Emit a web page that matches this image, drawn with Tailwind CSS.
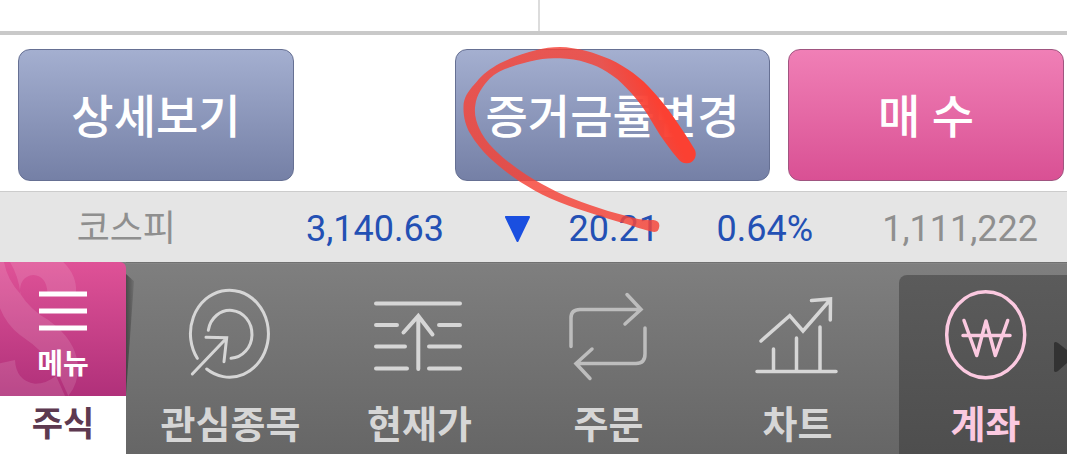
<!DOCTYPE html>
<html lang="ko">
  <head>
    <meta charset="UTF-8" />
    <meta name="viewport" content="width=device-width, initial-scale=1.0" />
    <script src="https://cdn.jsdelivr.net/npm/@tailwindcss/browser@4"></script>
    <title>주식</title>
  </head>
  <body
    class="w-full min-h-screen bg-white flex flex-col overflow-x-hidden font-[Roboto,'Noto_Sans_CJK_KR',sans-serif]"
  >
    <!-- bottom edge of the list -->
    <div class="grid grid-cols-2 h-[35px] border-b-4 border-[#c9c9c9]">
      <div></div>
      <div class="border-l-2 border-[#dcdcdc] ml-1"></div>
    </div>

    <main
      class="grid grid-cols-[276fr_125fr_315fr_276fr] gap-[18px] pt-[14px] pb-[10px] pl-[18px] pr-[3px]"
    >
      <button
        type="button"
        class="h-[132px] pt-1 rounded-xl border border-[#667093] bg-linear-to-b from-[#a4afd0] to-[#7580a6] text-white text-[46px] font-medium"
      >
        상세보기
      </button>
      <div></div>
      <div class="relative z-10">
        <button
          type="button"
          class="w-full h-[132px] pt-1 rounded-xl border border-[#667093] bg-linear-to-b from-[#a4afd0] to-[#7580a6] text-white text-[46px] font-medium whitespace-nowrap"
        >
          증거금률변경
        </button>
        <!-- red marker -->
        <svg
          class="absolute -left-[15px] -top-[29px] w-[340px] h-[230px] max-w-none pointer-events-none"
          viewBox="0 0 1020 690"
          aria-hidden="true"
        >
          <defs>
            <linearGradient id="marker" gradientUnits="userSpaceOnUse" x1="420" y1="0" x2="508" y2="-44">
              <stop offset="0" stop-color="#f5453a" stop-opacity="0.84" />
              <stop offset="1" stop-color="#fb4032" />
            </linearGradient>
          </defs>
          <path
            fill="url(#marker)"
            d="M742 430C762 428 772 408 765 390C745 355 722 322 700 290C680 260 662 240 640 215C602 172 560 142 510 118C465 98 410 82 360 81C335 81 312 85 290 90C250 100 215 112 180 130C150 146 128 164 110 185C90 207 75 225 71 250C68 285 76 315 90 340C106 368 126 392 150 415C178 441 208 464 240 485C270 504 300 521 330 535C366 551 403 564 440 575C480 588 520 601 560 612C590 622 620 632 643 636C654 636 657 627 658 618C659 606 650 601 640 600C612 602 586 596 560 588C522 579 486 568 450 555C416 543 382 530 350 515C319 500 289 484 260 465C228 444 197 421 170 395C150 376 131 354 120 330C107 304 102 280 106 255C110 225 128 198 150 175C166 160 187 149 210 142C236 132 262 126 290 120C313 116 336 115 360 115C388 116 414 120 440 128C462 134 482 143 500 155C523 169 543 185 560 205C579 224 595 243 610 265C628 291 643 318 660 345C677 370 693 392 712 414C720 425 730 431 742 430Z"
          />
        </svg>
      </div>
      <button
        type="button"
        class="h-[132px] pt-1 rounded-xl border border-[#a05580] bg-linear-to-b from-[#f07fb6] to-[#d95094] text-white text-[46px] font-medium"
      >
        매 수
      </button>
    </main>

    <section
      class="grid grid-cols-[176fr_268fr_87fr_128fr_154fr_225fr] items-center h-[71px] pt-1 pr-[29px] border-t border-[#cccccc] bg-[#e5e5e5] text-right text-[36px] text-[#2350b4]"
    >
      <span class="text-[#8f8f8f]">코스피</span>
      <span>3,140.63</span>
      <svg class="w-[27px] h-[27px] ml-auto" viewBox="0 0 27 27" aria-label="하락">
        <path d="M2 1H25L13.500 25Z" fill="#1a4fe0" stroke="#1a4fe0" stroke-width="2" stroke-linejoin="round" />
      </svg>
      <span>20.21</span>
      <span>0.64%</span>
      <span class="text-[#8f8f8f]">1,111,222</span>
    </section>

    <nav
      class="relative flex-1 flex min-h-[192px] bg-linear-to-b from-[#7f7f7f] to-[#666666] text-[#d6d6d6] text-[38px] leading-[56px] font-bold"
    >
      <div class="w-[126px] shrink-0 flex flex-col">
        <button
          type="button"
          class="relative h-[134px] overflow-hidden rounded-tr-md bg-linear-to-b from-[#df5297] to-[#b0307a] text-white"
        >
          <svg class="absolute left-0 top-0 w-[126px] h-[134px]" viewBox="0 21 378 402" aria-hidden="true">
            <path
              fill="#fff"
              fill-opacity="0.12"
              d="M0 21H12Q22 75 62 118Q55 62 30 21H190Q232 62 228 115L142 112Q140 64 100 60Q58 64 60 115Q90 165 145 195Q228 255 234 332Q236 385 205 423L172 350Q135 290 60 240Q20 210 0 160ZM0 325L45 315Q48 378 105 386Q140 386 168 362L195 423H0Z"
            />
          </svg>
          <span class="relative flex flex-col items-center pt-[20px]">
            <svg class="w-[48px] h-[40px]" viewBox="0 0 48 40" stroke="#fff" stroke-width="5" aria-hidden="true">
              <path d="M0 3H48M0 20H48M0 37H48" />
            </svg>
            <span class="mt-3 text-[28px] leading-[44px]">메뉴</span>
          </span>
        </button>
        <a href="#" class="flex-1 bg-white text-center text-[34px] text-[#5d3950]">주식</a>
      </div>
      <!-- shade cast by the menu tab -->
      <div class="w-[8px] h-[120px] mt-[12px] shrink-0 bg-linear-to-r from-black/40 to-black/10 [clip-path:polygon(0_0,100%_6%,0_100%)]"></div>

      <div class="flex-1 grid grid-cols-4 ml-[2px] mr-[7px] pt-[23px]">
        <a href="#" class="flex flex-col items-center gap-3 whitespace-nowrap">
          <svg class="w-[100px] h-[100px]" viewBox="181 285 100 100" fill="none" stroke="currentColor" stroke-width="3" stroke-linecap="round">
            <path d="M197.300 358.300A39 43.500 0 1 1 206.700 369" />
            <path d="M208.300 330.300A22 24 0 1 1 231 358.300" />
            <path d="M192.300 374L226.700 338M206 337.300L226.700 337.700L224 361.700" />
          </svg>
          관심종목
        </a>
        <a href="#" class="flex flex-col items-center gap-3 whitespace-nowrap">
          <svg class="w-[100px] h-[100px]" viewBox="370 285 100 100" fill="none" stroke="currentColor" stroke-width="4" stroke-linecap="round">
            <path d="M376 303.500H460M376 325H397M439 325H460M376 346.500H405M429 346.500H460M376 368.500H407M429 368.500H460" />
            <path d="M418.300 369V316M403.500 332.500L418.300 316L432.500 334.500" />
          </svg>
          현재가
        </a>
        <a href="#" class="flex flex-col items-center gap-3 whitespace-nowrap">
          <svg class="w-[100px] h-[100px] text-[#bdbdbd]" viewBox="559 285 100 100" fill="none" stroke="currentColor" stroke-width="3.500" stroke-linecap="round">
            <path d="M571 346.500V318Q571 309.500 580 309.500H640M627 294.500L641 309.500L625 324" />
            <path d="M645 328V354Q645 363.500 636 363.500H576M592 349L576 363.500L590 378.500" />
          </svg>
          주문
        </a>
        <a href="#" class="flex flex-col items-center gap-3 whitespace-nowrap">
          <svg class="w-[100px] h-[100px]" viewBox="748 285 100 100" fill="none" stroke="currentColor" stroke-width="3.500" stroke-linecap="round">
            <path d="M757 371.500H836M773.500 349V370M796.500 338V370M820 327V370" />
            <path d="M761 341L789.700 315.700L803 331L830 300M811.500 300.500L830.500 299L830.300 320" />
          </svg>
          차트
        </a>
      </div>

      <a
        href="#"
        class="relative w-[168px] shrink-0 mt-[13px] pt-[10px] pl-[5px] flex flex-col items-center gap-3 rounded-tl-lg bg-linear-to-b from-[#5b5b5b] to-[#4e4e4e] text-[#fbc9e0]"
      >
        <svg class="w-[100px] h-[100px] shrink-0" viewBox="936 285 100 100" fill="none" stroke="currentColor" stroke-width="3.500" stroke-linecap="round" stroke-linejoin="round">
          <ellipse cx="985.700" cy="334.700" rx="39" ry="43" />
          <path d="M964 320.500L976.700 355.500L986 321L995.300 355.500L1007.700 320.500M963 335.500H1010" />
        </svg>
        계좌
        <svg class="absolute right-0 top-[66px] w-[13px] h-[32px]" viewBox="0 0 13 32" fill="#333333" aria-hidden="true">
          <path d="M0 2Q1 0 4 2L13 9V22L4 30Q1 32 0 30Z" />
        </svg>
      </a>
      <!-- top edge line -->
      <div class="absolute left-[126px] right-0 top-0 h-[2px] bg-linear-to-b from-[#666666] to-[#909090]"></div>
    </nav>
  </body>
</html>
